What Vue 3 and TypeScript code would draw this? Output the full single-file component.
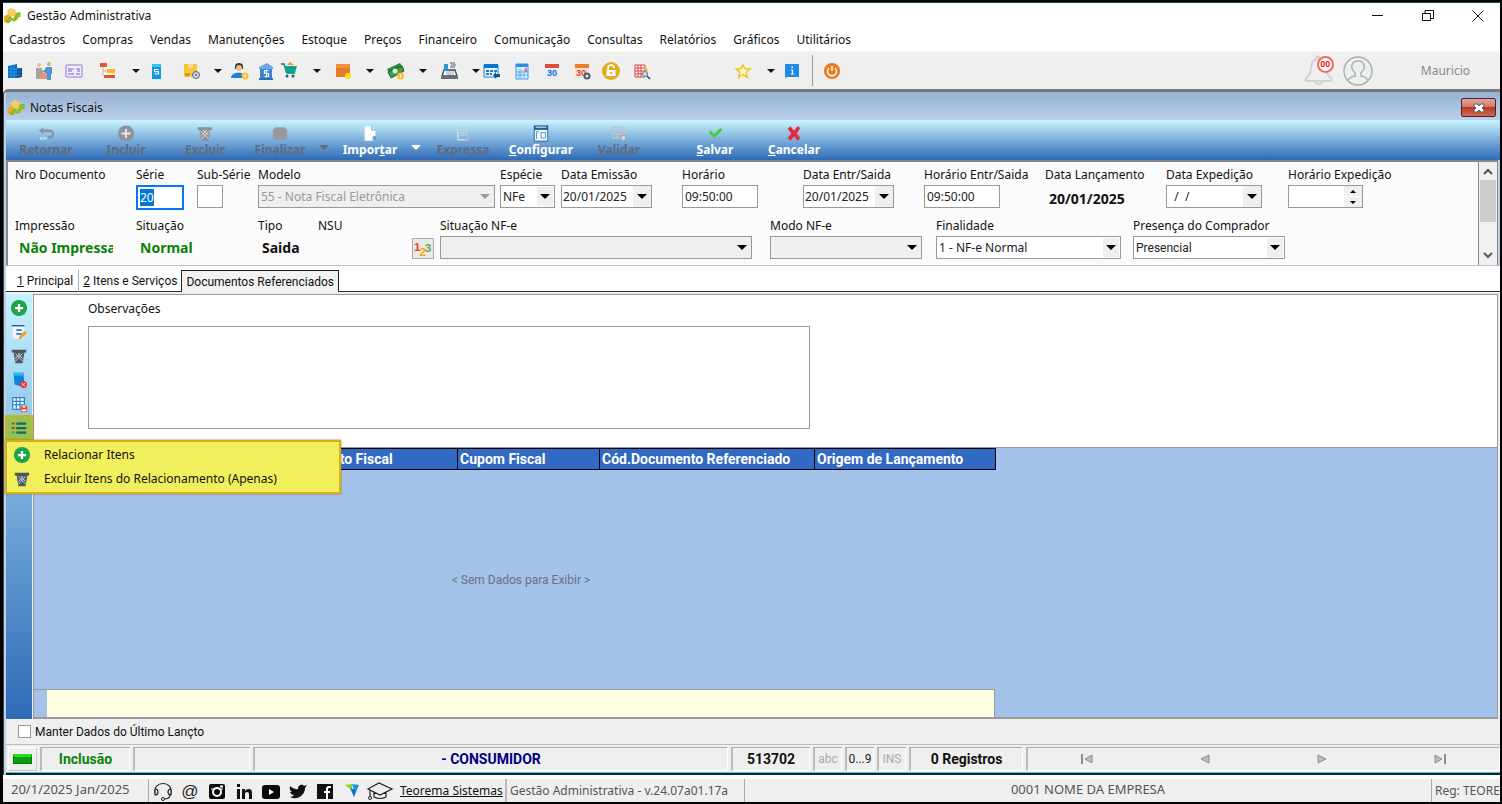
<script setup lang="ts">
import { onMounted, ref } from 'vue'

const menus: string[] = [
  'Cadastros', 'Compras', 'Vendas', 'Manutenções', 'Estoque', 'Preços', 'Financeiro',
  'Comunicação', 'Consultas', 'Relatórios', 'Gráficos', 'Utilitários',
]

const icons: Record<string, string> = {
  company: '<path d="M4 5l9-2v14H4z" fill="#0c6fc4"/><path d="M13 7h5v9l-5 1z" fill="#0b4c8f"/><path d="M4 8h13M4 11h13M4 14h13M7 5v12M10 4v13" stroke="#2aa0f0" stroke-width=".7"/>',
  people: '<circle cx="5" cy="4" r="2" fill="#e8c07a"/><circle cx="15" cy="3" r="2" fill="#e8b05a"/><path d="M2 18V7h6v11z" fill="#a9a29c"/><path d="M12 6h6v7h-1v6h-4v-6l-3-3z" fill="#4b95dc"/><path d="M6 12h7v6H6z" fill="#e8937c"/><path d="M8 12v-2h3v2" fill="none" stroke="#777"/>',
  card: '<rect x="2" y="4" width="16" height="12" rx="1" fill="#f1edff" stroke="#b09ee6" stroke-width="1.500"/><path d="M4 8h6M4 10h4M4 13h6M12 8h4M13 10h3M12 13h4" stroke="#7b63c7"/>',
  tree: '<path d="M2 2h7v4H2zM6 14h11v3H6z" fill="#e5532d"/><path d="M9 8h8v4H9z" fill="#f5b921"/><path d="M5 6v9M5 10h4" fill="none" stroke="#c9b9b0"/>',
  book: '<path d="M6 3h9v15H6z" fill="#1395e6"/><path d="M6 3h9v3H6z" fill="#31c5f3"/><path d="M12.500 8.500h-4v2.200h4v2.300h-4" fill="none" stroke="#fff" stroke-width="1.200"/>',
  box: '<path d="M3 3h13v13H3z" fill="#f7c63d"/><path d="M7 3h5v4H7z" fill="#fbe08b"/><path d="M5 12v2h3v-2" fill="none" stroke="#8a6b14"/><circle cx="15" cy="14" r="3.500" fill="#cfd8e4" stroke="#51657e"/><circle cx="15" cy="14" r="1" fill="#51657e"/>',
  user: '<path d="M5 5c0-4 8-4 8 0v3H5z" fill="#33373c"/><circle cx="9" cy="7" r="3" fill="#f7b982"/><path d="M1 17c0-7 15-7 15 0z" fill="#1c7fd2"/><circle cx="15" cy="15" r="3.500" fill="#fbc02d"/><path d="M15 13v4" stroke="#fff"/>',
  bank: '<path d="M2 6l8-4 6 4v2H2z" fill="#6ca8ea"/><path d="M3 8h12v10H3z" fill="#4284d2"/><path d="M2 17h14v2H2z" fill="#2e70bd"/><path d="M11.500 9.500h-4v3h4v3h-4M9.500 8.500v8" fill="none" stroke="#fff" stroke-width="1.200"/>',
  cart: '<path d="M2 3h3l3 9h8" fill="none" stroke="#067f78" stroke-width="1.500"/><path d="M5 5h13l-2 7H7z" fill="#0aa394"/><path d="M8 4l3-3 4 3z" fill="#f0912c"/><circle cx="8" cy="15" r="1.500" fill="#27615f"/><circle cx="14" cy="15" r="1.500" fill="#27615f"/>',
  parcel: '<path d="M3 3h14v13H3z" fill="#e57b26"/><path d="M3 3h14v4H3z" fill="#f08f3c"/><circle cx="15" cy="15" r="3" fill="#fde21a"/>',
  money: '<path d="M1 8l13-6 4 6-14 6z" fill="#2a8a3d"/><path d="M2 11l14-6 2 5-13 7z" fill="#3f9f4f" stroke="#1c6129"/><circle cx="9" cy="10" r="2.500" fill="#d9f2dc"/><circle cx="14.500" cy="15" r="3.500" fill="#fbc02d"/><path d="M14.500 13v4" stroke="#fff"/>',
  register: '<path d="M2 17h17M3 15l2-6h11l2 6z" fill="#fff" stroke="#3b4349" stroke-width="1.300"/><path d="M5 3h4v7H5z" fill="#2f93dc"/><path d="M11 2h5M12 4h5M11 6h5" stroke="#55606a"/><path d="M7 11h8M7 13h8" stroke="#9aa5ad"/>',
  planner: '<path d="M2 4h14v12H2z" fill="#e9f5ff" stroke="#1f7dd0"/><path d="M2 3h14v4H2z" fill="#0877d0"/><path d="M4 9h3v2H4zM8 9h3v2H8zM4 12h3v2H4zM8 12h2v2H8zM12 9h3v2h-3z" fill="#1f7dd0"/><path d="M11 14l3-3v2h4v3h-4v2z" fill="#0a5796"/>',
  calc: '<path d="M4 3h12v15H4z" fill="#dcefff" stroke="#3d9ae0"/><path d="M4 3h12v3H4z" fill="#2b8fe0"/><path d="M7 8v9M9 8v9M12 8v9M4 11h12M4 14h12" stroke="#3d9ae0" stroke-width=".7"/><path d="M14 7v4" stroke="#e44" stroke-width="1.500"/>',
  date: '<path d="M3 5h14v12H3z" fill="#dfeefb"/><path d="M3 3h14v4H3z" fill="#e4483c"/><text x="10" y="15" text-anchor="middle" font-family="Liberation Sans" font-weight="700" font-size="9" fill="#1f6fbd">30</text>',
  dategear: '<path d="M3 5h14v12H3z" fill="#f8e0d2"/><path d="M3 3h14v4H3z" fill="#ee7c28"/><text x="9" y="15" text-anchor="middle" font-family="Liberation Sans" font-weight="700" font-size="9" fill="#d8492d">30</text><circle cx="15" cy="15" r="2.500" fill="none" stroke="#46606c" stroke-width="2"/>',
  lock: '<circle cx="10" cy="10" r="9" fill="#e6ac20"/><path d="M5.500 9h9v6h-9z" fill="#fff"/><path d="M7 9V7a3 3 0 0 1 6 0" fill="none" stroke="#fff" stroke-width="1.500"/><path d="M9 12h2" stroke="#e6ac20" stroke-width="2"/>',
  search: '<path d="M3 4h10v12H3z" fill="#fff" stroke="#df4038"/><path d="M3 7h10M3 10h10M3 13h10M6 4v12M9 4v12" stroke="#df4038"/><path d="M12 5l4 4-2 4" fill="#f5b72a"/><circle cx="13" cy="13" r="2.500" fill="#bde3fb" stroke="#4286b5"/><path d="M15 15l3 3" stroke="#324049" stroke-width="1.500"/>',
  star: '<path d="M10 4l2 4h5l-4 3.200 1.500 5.300L10 13.500 5.500 16.500 7 11.200 3 8h5z" fill="#fff9df" stroke="#f6c41c" stroke-width="1.500"/>',
  info: '<path d="M3 3h14v13H5l-2 1z" fill="#2089e8"/><path d="M9 9h1.500v4M9 13h3" fill="none" stroke="#fff" stroke-width="1.200"/><path d="M9.500 5.500h1.500v1.500H9.500z" fill="#fff"/>',
  power: '<circle cx="10" cy="10" r="8" fill="#ea7b22"/><path d="M7 7a4.500 4.500 0 1 0 6 0M10 5v5" fill="none" stroke="#fff" stroke-width="1.500"/>',
  caret: '<path d="M6 8h8l-4 4z" fill="#111"/>',
  back: '<path d="M7 2L2 6l5 4V7.500h8q2 0 2 2t-2 2h-3v3h3q4-1 4-5t-4-5H7z" fill="#8e9499"/><path d="M4 13v3M6 13v3M8 13v3M10 13v3" stroke="#e9eef3"/>',
  plusgray: '<circle cx="10" cy="9" r="9" fill="#8e9499"/><path d="M10 4v10M5 9h10" stroke="#e9eef3" stroke-width="2"/>',
  trashgray: '<path d="M2 2h16v3H2zM4 5h12l-2 12H6z" fill="#8b9196"/><path d="M5 6l9 9M8 5l6 6M15 6l-9 9M12 5l-6 6" stroke="#e2e8ed" stroke-width="1"/>',
  blob: '<path d="M5 2h10l3 3v8l-3 3H5l-3-3V5z" fill="#969a9e"/>',
  doc: '<path d="M4 1h8l4 4v12H4z" fill="#fff"/><path d="M12 1v4h4" fill="none" stroke="#78828a"/><path d="M13 12h4v5h-4z" fill="#5aa5df"/>',
  listgray: '<path d="M5 2h9v14H5zM7 5h5M7 8h5M7 11h5" fill="none" stroke="#c3d0dc" stroke-width="1.500"/><path d="M2 4h2v12h8" fill="none" stroke="#d5dde4"/><path d="M12 14l4-4 2 5-3 3z" fill="#aab6c1"/>',
  config: '<path d="M2 0h16v18H2z" fill="#205f95"/><path d="M3 5h14v12H3z" fill="#eef7fd"/><path d="M4 2h12" stroke="#a6d3f0" stroke-width="1.500"/><path d="M5 15V7h3M10 14V8h5v6z" fill="none" stroke="#508fc0"/>',
  gridgray: '<path d="M3 2h13v12H3zM3 6h13M3 10h13M8 2v12M12 2v12" fill="none" stroke="#bac4cd" stroke-width="1.500"/><circle cx="15" cy="14" r="3" fill="#cfd7dd" stroke="#8e989f"/>',
  check: '<path d="M3 8l2-2 4 4 7-7 2 2-9 9z" fill="#3fce25"/>',
  cross: '<path d="M3 4l3-3 4 5 4-5 3 2-4 6 4 5-3 3-4-5-4 5-3-3 4-5z" fill="#e8283c"/>',
  plus: '<circle cx="10" cy="10" r="9" fill="#1fa34a"/><path d="M10 5.500v9M5.500 10h9" stroke="#fff" stroke-width="2.500"/>',
  edit: '<path d="M3 4h13v13H3z" fill="#f2f5fb"/><path d="M2 3h14" stroke="#3c53b5" stroke-width="1.500"/><path d="M7 8h6M7 12h6" stroke="#2c7ed0" stroke-width="2"/><path d="M10 15l6-6 3 2-6 6-3 1z" fill="#f4a126"/>',
  trash: '<path d="M2 3h16v3H2zM4 6h12l-2 12H6z" fill="#50565c"/><path d="M6 7l8 9M9 7l5 6M14 7l-8 9M11 7l-5 6" stroke="#c9dbe6" stroke-width="1"/>',
  bookdel: '<path d="M4 2h11l1 14-4 1-7-2z" fill="#0d83df"/><path d="M4 2h11v3H4z" fill="#29bdeb"/><circle cx="15" cy="15" r="4" fill="#ea3347"/><path d="M13.500 13.500l3 3m0-3l-3 3" stroke="#fff"/>',
  gridsave: '<path d="M3 3h13v13H3z" fill="#f1f8fe"/><path d="M3 3h13v13H3zM3 7h13M3 11h13M7 3v13M11 3v13" fill="none" stroke="#2a84cf" stroke-width="1.300"/><path d="M12 12h7v7h-7z" fill="#ee472b"/><path d="M14 12h3v2h-3zM13 16h5v2h-5z" fill="#fff"/>',
  list: '<path d="M7 5h11M7 10h11M7 15h11" stroke="#1c6656" stroke-width="2.500"/><path d="M2 4h3v2H2zM2 9h3v2H2z" fill="#c2361c"/><path d="M2 14h3v2H2z" fill="#32a350"/>',
  headset: '<path d="M2 13c-3-14 19-14 16 0M2 8v6q3 0 3-3T2 8M18 8v6q-3 0-3-3t3-3M17 14q0 4-6 4" fill="none" stroke="#222" stroke-width="1.200"/><circle cx="10" cy="18" r="1.500" fill="#fff" stroke="#222"/>',
  at: '<text x="10" y="16" text-anchor="middle" font-family="Liberation Sans" font-size="17" fill="#222">@</text>',
  instagram: '<rect x="2" y="3" width="16" height="15" rx="2" fill="#0b0b0b"/><circle cx="10" cy="11" r="4" fill="none" stroke="#fff" stroke-width="2"/><path d="M4 8h3M13 8h3" stroke="#fff"/><path d="M13 4.500h3v2h-3z" fill="#fff"/>',
  linkedin: '<path d="M3 8h3v10H3zM3 3h3v3H3zM8 8h3v2q1-2 4-2 3 0 3 4v6h-3v-5q0-2-2-2t-2 2v5H8z" fill="#111"/>',
  youtube: '<rect x="1" y="4" width="18" height="14" rx="3" fill="#0b0b0b"/><path d="M8 8v6l5-3z" fill="#fff"/>',
  twitter: '<path d="M2 5q4 4 8 3c0-5 5-5 6-3l3-1-2 3C17 14 9 20 2 16q3 0 4-2-3 0-4-3h2Q1 9 2 5z" fill="#111"/>',
  facebook: '<path d="M2 3h16v15H2z" fill="#111"/><path d="M16 6h-2q-2 0-2 2v10M9 11h6" fill="none" stroke="#fff" stroke-width="2"/>',
  logo: '<path d="M3 4l7-1v6z" fill="#96cf2c"/><path d="M10 3l7 1-5 12V9z" fill="#1497dc"/><path d="M8 7l4 9 2-7z" fill="#126bc5"/>',
  cap: '<path d="M-1 8l11-6 13 6-12 6zM5 11v5q6 3 12 0v-5M1 9v8" fill="none" stroke="#222" stroke-width="1.200"/><circle cx="1" cy="17" r="1.500" fill="#fff" stroke="#222"/>',
  app: '<path d="M5 3l4-2 5 2v6l-5 2-4-2z" fill="#f4cf65"/><path d="M1 10l5-2 3 3v5l-5 2-3-2z" fill="#eba92f"/><path d="M12 8h5v5l-4 4z" fill="#e9b53b"/><path d="M4 16l4-5 3 2 4-4-1-2 5-1v5l-2-1-5 6-3-2-3 4z" fill="#8ed01c" stroke="#4e9413" stroke-width=".6"/>',
  numbers: '<text x="0" y="12" font-family="Liberation Sans" font-weight="700" font-size="13" fill="#f0401c">1</text><text x="6" y="18" font-family="Liberation Sans" font-weight="700" font-size="13" fill="#f5a800">2</text><text x="12" y="13" font-family="Liberation Sans" font-weight="700" font-size="13" fill="#62a83a">3</text>',
}

const tools: { icon: string; name: string }[] = [
  { icon: 'company', name: 'Empresa' }, { icon: 'people', name: 'Clientes' },
  { icon: 'card', name: 'Ficha' }, { icon: 'tree', name: 'Grupos' }, { icon: 'caret', name: 'Mais grupos' },
  { icon: 'book', name: 'Livro' }, { icon: 'box', name: 'Produtos' }, { icon: 'caret', name: 'Mais produtos' },
  { icon: 'user', name: 'Vendedor' }, { icon: 'bank', name: 'Banco' }, { icon: 'cart', name: 'Vendas' },
  { icon: 'caret', name: 'Mais vendas' }, { icon: 'parcel', name: 'Estoque' }, { icon: 'caret', name: 'Mais estoque' },
  { icon: 'money', name: 'Financeiro' }, { icon: 'caret', name: 'Mais financeiro' }, { icon: 'register', name: 'Caixa' },
  { icon: 'caret', name: 'Mais caixa' }, { icon: 'planner', name: 'Agenda' }, { icon: 'calc', name: 'Calculadora' },
  { icon: 'date', name: 'Calendário' }, { icon: 'dategear', name: 'Configurar calendário' }, { icon: 'lock', name: 'Bloquear' },
  { icon: 'search', name: 'Pesquisar' }, { icon: 'star', name: 'Favoritos' }, { icon: 'caret', name: 'Mais favoritos' },
  { icon: 'info', name: 'Informações' },
]

interface Action { icon: string; pre: string; key: string; post: string; off?: boolean; size: string }
const actions: Action[] = [
  { icon: 'back', pre: 'Retornar', key: '', post: '', off: true, size: 'w80' },
  { icon: 'plusgray', pre: '', key: 'I', post: 'ncluir', off: true, size: 'w80' },
  { icon: 'trashgray', pre: '', key: 'E', post: 'xcluir', off: true, size: 'w78' },
  { icon: 'blob', pre: '', key: 'F', post: 'inalizar', off: true, size: 'w72' },
  { icon: '', pre: '', key: '', post: '', off: true, size: 'w16' },
  { icon: 'doc', pre: 'Impor', key: 't', post: 'ar', size: 'w76' },
  { icon: '', pre: '', key: '', post: '', size: 'w16' },
  { icon: 'listgray', pre: 'Expre', key: 's', post: 'sa', off: true, size: 'w78' },
  { icon: 'config', pre: '', key: 'C', post: 'onfigurar', size: 'w78' },
  { icon: 'gridgray', pre: '', key: 'V', post: 'alidar', off: true, size: 'w78' },
  { icon: 'check', pre: '', key: 'S', post: 'alvar', size: 'w114' },
  { icon: 'cross', pre: '', key: 'C', post: 'ancelar', size: 'w44' },
]

const side: { icon: string; name: string }[] = [
  { icon: 'plus', name: 'Incluir' }, { icon: 'edit', name: 'Editar' }, { icon: 'trash', name: 'Excluir' },
  { icon: 'bookdel', name: 'Limpar' }, { icon: 'gridsave', name: 'Salvar grade' }, { icon: 'list', name: 'Relacionamento' },
]
const social: string[] = ['headset', 'at', 'instagram', 'linkedin', 'youtube', 'twitter', 'facebook', 'logo', 'cap']

const serie = ref('20')
const serieBox = ref<HTMLInputElement | null>(null)
onMounted(() => {
  serieBox.value?.focus()
  serieBox.value?.select()
})
</script>

<template>
  <div class="app">
    <header class="titlebar">
      <svg class="ic" viewBox="0 0 20 20" v-html="icons.app"></svg>
      <span class="title">Gestão Administrativa</span>
      <div class="winbtns">
        <button aria-label="Minimizar"><svg viewBox="0 0 12 12"><path d="M0 5.500h11" stroke="#111" /></svg></button>
        <button aria-label="Restaurar"><svg viewBox="0 0 12 12"><path d="M.5 3.500h8v7h-8zM3 3V.5h8.500v8H9" fill="none" stroke="#111" /></svg></button>
        <button aria-label="Fechar"><svg viewBox="0 0 12 12"><path d="M.5.5l11 11m0-11l-11 11" stroke="#111" /></svg></button>
      </div>
    </header>
    <nav class="menubar">
      <button v-for="m in menus" :key="m">{{ m }}</button>
    </nav>
    <div class="toolbar">
      <div class="tools">
        <button v-for="t in tools" :key="t.name" :aria-label="t.name">
          <svg class="ic" viewBox="0 0 20 20" v-html="icons[t.icon]"></svg>
        </button>
        <span class="vsep"></span>
        <button aria-label="Sair"><svg class="ic" viewBox="0 0 20 20" v-html="icons.power"></svg></button>
      </div>
      <div class="account">
        <div class="bell">
          <svg viewBox="0 0 30 32"><path d="M12 3q2-3 4 0M14 4C4 4 9 18 4 21q-4 4-2 5h25q2-1-2-5C20 17 25 4 14 4zM11 27a4 4 0 0 0 7 0" fill="none" stroke="#d3d3d3" stroke-width="2" /></svg>
          <span class="badge">00</span>
        </div>
        <svg class="avatar" viewBox="0 0 30 30"><circle cx="15" cy="15" r="14" fill="none" stroke="#a7b4b6" stroke-width="1.500" /><path d="M5 25q1-4 7-5v-3c-6-6-3-12 3-12s9 6 3 12v3q6 1 7 5" fill="none" stroke="#a7b4b6" stroke-width="1.500" /></svg>
        <span class="username">Mauricio</span>
      </div>
    </div>

    <section class="window">
      <div class="wtitle">
        <svg class="ic" viewBox="0 0 20 20" v-html="icons.app"></svg>
        <span>Notas Fiscais</span>
        <button class="wclose" aria-label="Fechar Notas Fiscais"><svg viewBox="0 0 12 10"><path d="M1 1h3l2 2 2-2h3v2L9 5l2 2v2H8L6 7 4 9H1V7l2-2-2-2z" fill="#fff" stroke="#55606e" /></svg></button>
      </div>
      <div class="actions">
        <button v-for="(a, i) in actions" :key="i" :class="['action', a.size, { off: a.off }]" :disabled="a.off" :aria-label="a.icon ? undefined : 'Mais opções'">
          <template v-if="a.icon">
            <svg viewBox="0 0 20 18" v-html="icons[a.icon]"></svg>
            <span>{{ a.pre }}<u>{{ a.key }}</u>{{ a.post }}</span>
          </template>
          <i v-else class="tri"></i>
        </button>
      </div>

      <div class="formpanel">
        <div class="form">
          <div class="row one">
            <div class="field"><label>Nro Documento</label></div>
            <div class="field"><label for="serie">Série</label><input id="serie" ref="serieBox" v-model="serie" class="serie" /></div>
            <div class="field"><label for="sub">Sub-Série</label><input id="sub" class="sub" /></div>
            <div class="field"><label for="modelo">Modelo</label><div class="sel modelo"><select id="modelo" disabled><option>55 - Nota Fiscal Eletrônica</option></select></div></div>
            <div class="field"><label for="especie">Espécie</label><div class="sel especie"><select id="especie"><option>NFe</option></select></div></div>
            <div class="field"><label for="emissao">Data Emissão</label><div class="combo"><input id="emissao" value="20/01/2025" /><button aria-label="Abrir calendário"></button></div></div>
            <div class="field"><label for="hora">Horário</label><input id="hora" class="time" value="09:50:00" /></div>
            <div class="field"><label for="entr">Data Entr/Saida</label><div class="combo"><input id="entr" value="20/01/2025" /><button aria-label="Abrir calendário"></button></div></div>
            <div class="field"><label for="hentr">Horário Entr/Saida</label><input id="hentr" class="time" value="09:50:00" /></div>
            <div class="field"><label>Data Lançamento</label><b class="dt">20/01/2025</b></div>
            <div class="field"><label for="exped">Data Expedição</label><div class="combo wide"><input id="exped" value="  /  /" /><button aria-label="Abrir calendário"></button></div></div>
            <div class="field"><label for="hexp">Horário Expedição</label><div class="spin"><input id="hexp" /><div><button class="up" aria-label="Aumentar"></button><button aria-label="Diminuir"></button></div></div></div>
          </div>
          <div class="row two">
            <div class="field"><label>Impressão</label><b class="green clip">Não Impressa</b></div>
            <div class="field"><label>Situação</label><b class="green">Normal</b></div>
            <div class="field"><label>Tipo</label><b>Saida</b></div>
            <div class="field"><label>NSU</label><button class="nsu" aria-label="Gerar NSU"><svg class="ic" viewBox="0 0 20 20" v-html="icons.numbers"></svg></button></div>
            <div class="field"><label for="sitnfe">Situação NF-e</label><div class="sel gray sit"><select id="sitnfe"><option></option></select></div></div>
            <div class="field"><label for="modo">Modo NF-e</label><div class="sel gray modo"><select id="modo"><option></option></select></div></div>
            <div class="field"><label for="fin">Finalidade</label><div class="sel fin"><select id="fin"><option>1 - NF-e Normal</option></select></div></div>
            <div class="field"><label for="pres">Presença do Comprador</label><div class="sel pres"><select id="pres"><option>Presencial</option></select></div></div>
          </div>
        </div>
        <div class="vscroll">
          <svg viewBox="0 0 10 8"><path d="M1 6l4-4 4 4" fill="none" stroke="#555" stroke-width="2" /></svg>
          <span class="thumb"></span>
          <svg viewBox="0 0 10 8"><path d="M1 2l4 4 4-4" fill="none" stroke="#555" stroke-width="2" /></svg>
        </div>
      </div>

      <div class="tabs">
        <button><u>1</u> Principal</button>
        <button class="second"><u>2</u> Itens e Serviços</button>
        <button class="active">Documentos Referenciados</button>
        <span class="rest"></span>
      </div>

      <div class="work">
        <div class="side">
          <button v-for="s in side" :key="s.icon" :class="{ hot: s.icon === 'list' }" :aria-label="s.name">
            <svg class="ic" viewBox="0 0 20 20" v-html="icons[s.icon]"></svg>
          </button>
          <div class="popup">
            <button><svg class="ic" viewBox="0 0 20 20" v-html="icons.plus"></svg>Relacionar Itens</button>
            <button><svg class="ic" viewBox="0 0 20 20" v-html="icons.trash"></svg>Excluir Itens do Relacionamento (Apenas)</button>
          </div>
        </div>
        <div class="content">
          <div class="obs">
            <label for="obs">Observações</label>
            <textarea id="obs"></textarea>
          </div>
          <div class="gridarea">
            <table>
              <thead>
                <tr><th class="c1"></th><th class="c2">Documento Fiscal</th><th class="c3">Cupom Fiscal</th><th class="c4">Cód.Documento Referenciado</th><th class="c5">Origem de Lançamento</th></tr>
              </thead>
            </table>
            <p class="empty">&lt; Sem Dados para Exibir &gt;</p>
            <div class="foot"></div>
          </div>
        </div>
      </div>

      <div class="keep"><label><input type="checkbox" />Manter Dados do Último Lançto</label></div>
      <div class="status">
        <span class="led"><i></i></span>
        <span class="cell s1">Inclusão</span>
        <span class="cell s2"></span>
        <span class="cell s3">- CONSUMIDOR</span>
        <span class="cell s4">513702</span>
        <span class="cell s5 dim">abc</span>
        <span class="cell s5 plain">0...9</span>
        <span class="cell s5 dim">INS</span>
        <span class="cell s6">0 Registros</span>
        <div class="cell pager">
          <button aria-label="Primeiro"><svg viewBox="0 0 14 10"><path d="M2 0v10" stroke="#8d8d8d" stroke-width="2" /><path d="M12 1v8L5 5z" fill="#bdbdbd" stroke="#8d8d8d" /></svg></button>
          <button aria-label="Anterior"><svg viewBox="0 0 14 10"><path d="M11 1v8L3 5z" fill="#bdbdbd" stroke="#8d8d8d" /></svg></button>
          <button aria-label="Próximo"><svg viewBox="0 0 14 10"><path d="M3 1v8l8-4z" fill="#bdbdbd" stroke="#8d8d8d" /></svg></button>
          <button aria-label="Último"><svg viewBox="0 0 14 10"><path d="M12 0v10" stroke="#8d8d8d" stroke-width="2" /><path d="M2 1v8l7-4z" fill="#bdbdbd" stroke="#8d8d8d" /></svg></button>
        </div>
      </div>
    </section>

    <footer class="bottom">
      <span class="today">20/1/2025 Jan/2025</span>
      <div class="social">
        <a v-for="s in social" :key="s" href="#" :aria-label="s"><svg class="ic" viewBox="0 0 20 20" v-html="icons[s]"></svg></a>
        <a class="site" href="#">Teorema Sistemas</a>
      </div>
      <span class="version">Gestão Administrativa - v.24.07a01.17a</span>
      <span class="company">0001 NOME DA EMPRESA</span>
      <span class="reg">Reg: TEORE</span>
    </footer>
  </div>
</template>

<style>
body { background: #000; overflow: hidden; }
</style>

<style scoped>
* { box-sizing: border-box; }
button { background: none; border: 0; padding: 0; margin: 0; font: inherit; color: inherit; }
input, select, textarea { font: inherit; color: #222; margin: 0; border-radius: 0; outline: none; min-width: 0; }
.ic { width: 20px; height: 20px; display: block; flex: none; overflow: visible; }
.app { height: 100vh; display: flex; flex-direction: column; border: solid #000; border-width: 2px 2px 2px 3px; background: #fff; font-family: "Noto Sans", sans-serif; font-size: 12px; line-height: 20px; color: #111; overflow: hidden; white-space: nowrap; }
.titlebar { display: flex; align-items: center; height: 26px; border-top: 1px solid #1c4a55; flex: none; }
.titlebar .ic { width: 18px; height: 18px; }
.title { margin-left: 6px; }
.winbtns { margin-left: auto; display: flex; }
.winbtns button { width: 50px; height: 24px; display: flex; align-items: center; justify-content: center; }
.winbtns button:last-child { margin-right: -3px; }
.winbtns svg { width: 12px; height: 12px; }
.menubar { display: flex; gap: 17px; padding-left: 6px; height: 23px; align-items: center; flex: none; font-size: 12px; }
.toolbar { height: 38px; display: flex; justify-content: space-between; align-items: center; background: #efefef; border-top: 1px solid #f7f7f7; flex: none; }
.tools { display: grid; align-items: center; padding-left: 1px; grid-template-columns: 30px 30px 34px 28px 20px 35px 27px 22px 27px 22px 28px 26px 27px 26px 27px 26px 27px 16px 30px 30px 30px 29px 31px 101px 28px 21px 30px 10px 20px; }
.tools button { width: 20px; height: 20px; }
.vsep { width: 1px; height: 31px; background: #999; }
.account { display: flex; align-items: center; color: #8b8b8b; font-size: 12px; }
.bell { position: relative; width: 30px; height: 32px; }
.bell svg { width: 30px; height: 32px; }
.badge { position: absolute; top: 1px; right: 0; width: 17px; height: 17px; border: 2px solid #ef6a60; border-radius: 50%; background: #fff; color: #e11; font: 700 9px/13px "Liberation Sans", sans-serif; text-align: center; }
.avatar { width: 30px; height: 30px; margin-left: 9px; }
.username { margin: 0 30px 0 48px; }

.window { flex: 1; min-height: 0; display: flex; flex-direction: column; border: solid #444; border-width: 3px 0 0 1px; border-top-color: #777; padding-left: 2px; background: #bdd1ea; border-top-left-radius: 5px; }
.wtitle { display: flex; align-items: center; height: 28px; gap: 5px; padding: 3px 4px 0 1px; background: linear-gradient(#96b1d1, #bbd0e9); flex: none; }
.wtitle .ic { width: 18px; height: 18px; }
.wclose { margin-left: auto; width: 35px; height: 19px; border: 1px solid #4c1f26; border-radius: 2px; background: linear-gradient(#e3a49b 0, #d5796c 45%, #b83a24 50%, #cf6b54 100%); display: flex; align-items: center; justify-content: center; }
.wclose svg { width: 12px; height: 10px; }
.actions { display: flex; height: 40px; background: linear-gradient(#c9f4ff, #2e69b6); color: #fff; font-weight: 700; font-size: 12px; flex: none; }
.action { display: flex; flex-direction: column; align-items: center; padding-top: 5px; line-height: 16px; }
.action svg { width: 18px; height: 17px; flex: none; overflow: visible; }
.action.off { color: #5d6c7c; }
.w80 { width: 80px; } .w78 { width: 78px; } .w76 { width: 76px; } .w72 { width: 72px; } .w16 { width: 16px; } .w114 { width: 114px; } .w44 { width: 44px; }
.tri { border: solid transparent; border-width: 5px 5px 0; border-top-color: currentColor; margin-top: 20px; }

.formpanel { display: flex; height: 106px; margin-right: 2px; border: solid #888; border-width: 2px 1px 1px 2px; border-bottom-color: #c4c4c4; background: #fbfbfb; flex: none; }
.form { flex: 1; min-width: 0; padding: 3px 0 0 7px; overflow: hidden; }
.row { display: grid; height: 51px; }
.row.one { grid-template-columns: 121px 61px 61px 242px 61px 121px 121px 121px 121px 121px 122px 1fr; }
.row.two { grid-template-columns: 121px 122px 60px 122px 330px 166px 197px 1fr; }
.field { display: flex; flex-direction: column; min-width: 0; }
.field label { line-height: 20px; font-size: 12px; }
.field input { border: 1px solid #999; height: 23px; padding: 0 2px; background: #fff; }
.field .serie { width: 48px; height: 25px; border: 2px solid #0a74f5; padding: 0 2px; }
.serie::selection { background: #0078d7; color: #fff; }
.field .sub { width: 26px; }
.field .time { width: 76px; }
.sel { position: relative; height: 23px; }
.sel select { appearance: none; width: 100%; height: 100%; border: 1px solid #999; background: linear-gradient(#efefef, #efefef) right 1px center / 16px 19px no-repeat #fff; padding: 0 2px; opacity: 1; }
.sel::after { content: ""; position: absolute; right: 5px; top: 9px; border: solid transparent; border-width: 5px 5px 0; border-top-color: #000; pointer-events: none; }
.gray select, .modelo select { background: #efefef; }
.modelo { width: 237px; } .modelo select { color: #999; } .modelo::after { border-top-color: #999; }
.especie { width: 55px; }
.sit { width: 312px; } .modo { width: 152px; } .fin { width: 185px; }
.pres { width: 152px; font-family: Roboto, sans-serif; }
.combo { display: flex; width: 91px; height: 23px; border: 1px solid #999; background: #fff; }
.combo.wide { width: 96px; }
.field .combo input, .field .spin input { border: 0; flex: 1; height: 21px; padding: 0 0 0 1px; width: 0; white-space: pre; }
.combo button { width: 18px; display: flex; align-items: center; justify-content: center; background: #efefef; }
.combo button::before { content: ""; border: solid transparent; border-width: 5px 5px 0; border-top-color: #000; }
.spin { display: flex; width: 75px; height: 23px; border: 1px solid #999; background: #fff; }
.spin > div { width: 18px; display: flex; flex-direction: column; gap: 1px; }
.spin button { flex: 1; background: #efefef; display: flex; align-items: center; justify-content: center; }
.spin button::before { content: ""; border: solid transparent; border-width: 3px 3px 0; border-top-color: #000; }
.spin .up::before { border-width: 0 3px 3px; border-bottom-color: #000; }
.field b { font-size: 14px; line-height: 24px; padding-left: 4px; }
.field .dt { line-height: 28px; }
.green { color: #0a820a; }
.clip { width: 98px; overflow: hidden; }
.nsu { width: 22px; height: 21px; margin: 2px 0 0 94px; background: #e9e9e9; border: 1px solid #aaa; display: flex; align-items: center; justify-content: center; }
.nsu .ic { width: 18px; height: 18px; }
.vscroll { width: 19px; border-left: 1px solid #888; background: #f0f0f0; display: flex; flex-direction: column; align-items: center; padding: 6px 0; }
.vscroll svg { width: 10px; height: 8px; }
.vscroll .thumb { width: 16px; height: 42px; background: #cdcdcd; margin: 4px 0 auto; }

.tabs { display: flex; align-items: flex-end; height: 26px; background: #fff; font: 12px/20px Roboto, sans-serif; flex: none; }
.tabs button { height: 22px; padding: 0 5px 0 11px; border-bottom: 1px solid #333; }
.tabs .second { padding: 0 4px; border-left: 1px solid #aaa; }
.tabs .active { padding: 0 4px; border: 1px solid #222; border-bottom: 0; background: #f2f2f2; }
.tabs .rest { flex: 1; height: 22px; border-bottom: 1px solid #333; }

.work { display: flex; flex: 1; min-height: 0; background: #efefef; padding: 2px 2px 0 0; }
.side { position: relative; width: 26px; background: linear-gradient(#c5f4ff, #72a9d9 50%, #2f69b5); padding-top: 2px; }
.side > button { width: 26px; height: 24px; display: flex; align-items: center; justify-content: center; }
.side .ic { width: 18px; height: 18px; }
.side > .hot { background: #94c355; outline: 2px solid #cfb21c; outline-offset: -1px; }
.popup { position: absolute; z-index: 2; left: -1px; top: 146px; width: 336px; height: 54px; background: #f1ef5c; border: 2px solid #dcae16; box-shadow: 0 0 2px #8a7a30; padding-top: 1px; font-size: 12px; }
.popup button { display: flex; align-items: center; gap: 13px; height: 24px; width: 100%; padding-left: 6px; }
.content { flex: 1; min-width: 0; margin-left: 1px; display: flex; flex-direction: column; border: solid #999; border-width: 1px 1px 2px; background: #fff; }
.obs { display: flex; flex-direction: column; padding: 4px 0 18px 54px; gap: 7px; }
.obs textarea { width: 722px; height: 103px; border: 1px solid #999; resize: none; }
.gridarea { flex: 1; display: flex; flex-direction: column; justify-content: space-between; background: #a4c2ea; border-top: 1px solid #999; }
table { width: 961px; height: 22px; border-collapse: collapse; table-layout: fixed; }
th { background: #316ac5; border: 1px solid #000; color: #fff; font: 700 14px/19px Roboto, sans-serif; text-align: left; padding: 0 2px; }
.c1 { width: 243px; } .c2 { width: 180px; } .c3 { width: 142px; } .c4 { width: 215px; } .c5 { width: 181px; }
.empty { width: 948px; margin: 0 0 0 13px; text-align: center; color: #687280; font: 12px/16px Roboto, sans-serif; }
.foot { width: 961px; height: 28px; border: solid #999; border-width: 1px 1px 0 0; background: linear-gradient(90deg, #a4c2ea 13px, #ffffe1 13px); }

.keep { height: 26px; background: #efefef; display: flex; align-items: center; padding-left: 12px; border-bottom: 1px solid #bbb; font: 12px/20px Roboto, sans-serif; flex: none; }
.keep label { display: flex; align-items: center; gap: 4px; }
.keep input { appearance: none; width: 13px; height: 13px; background: #fff; border: 1px solid #999; }
.status { display: flex; gap: 3px; height: 30px; background: #efefef; padding: 2px 0 2px 2px; border-bottom: 2px solid #11222a; box-shadow: inset 0 -1px #35cfe0; font: 700 14px/23px Roboto, sans-serif; text-align: center; flex: none; }
.led { width: 29px; border: 1px solid #ccc; border-left-color: #fff; border-top-color: #fff; display: flex; align-items: center; justify-content: center; }
.led i { width: 19px; height: 10px; border: 1px solid #087808; border-top: 3px solid #24e024; background: #0b9d0b; }
.cell { border: 1px solid #fff; border-left: 2px solid #bbb; border-top-color: #aaa; }
.s1 { width: 90px; color: #0a820a; } .s2 { width: 117px; } .s3 { width: 475px; color: #00007f; } .s4 { width: 79px; } .s5 { width: 29px; font-weight: 400; font-size: 12px; } .s6 { width: 114px; }
.dim { color: #aaa; }
.plain { color: #222; }
.pager { flex: 1; display: flex; }
.pager button { flex: 1; display: flex; align-items: center; justify-content: center; }
.pager svg { width: 14px; height: 10px; }

.bottom { display: flex; height: 26px; margin-top: 1px; background: #efefef; border-top: 3px solid #fff; color: #555; font-size: 12px; flex: none; }
.bottom > span { border-right: 1px solid #aaa; }
.bottom .today { width: 146px; padding-left: 8px; font-size: 13px; }
.social { width: 358px; display: flex; align-items: center; gap: 7px; padding-left: 4px; border-right: 2px solid #bbb; }
.social .site { color: #111; margin-left: 4px; }
.version { width: 238px; padding: 2px 0 0 3px; }
.bottom .company { flex: 1; text-align: center; font-size: 13px; }
.bottom .reg { width: 68px; padding: 2px 0 0 3px; border-right: 0; }
</style>
